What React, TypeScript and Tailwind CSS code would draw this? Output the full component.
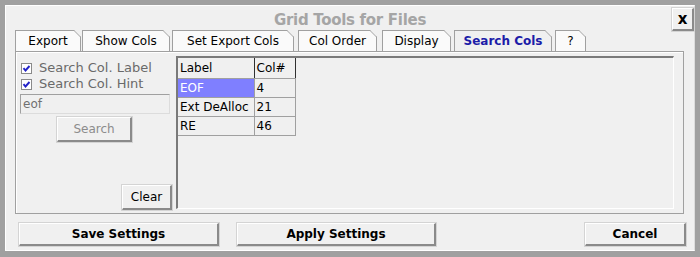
import React, { useState } from 'react';

const tabs = ['Export', 'Show Cols', 'Set Export Cols', 'Col Order', 'Display', 'Search Cols', '?'];
const tabWidths = ['w-[66px]', 'w-[88px]', 'w-[122px]', 'w-[79px]', 'w-[69px]', 'w-[98px]', 'w-[31px]'];
const tabGaps = ['mr-[1px]', 'mr-[2px]', 'mr-[4px]', 'mr-[5px]', 'mr-[3px]', 'mr-[3px]', ''];

const rows = [
  { label: 'EOF', col: '4' },
  { label: 'Ext DeAlloc', col: '21' },
  { label: 'RE', col: '46' },
];

const Tab: React.FC<{ label: string; active: boolean; width: string; gap: string; onClick: () => void }> = ({
  label,
  active,
  width,
  gap,
  onClick,
}) => (
  <div
    onClick={onClick}
    className={`relative h-[21px] ${width} ${gap} border-l border-t border-r border-[#a0a0a0] flex items-center justify-center text-[12px] cursor-default ${
      active ? 'bg-[#f0f0f0] text-[#1c1ca8] font-bold' : 'bg-[#fafafa] text-black'
    }`}
  >
    {label}
    {/* folded top-right corner */}
    <svg className="absolute -top-px -right-px" width="7" height="7" viewBox="0 0 7 7">
      <polygon points="0,0 7,0 7,7" fill="#f0f0f0" />
      <line x1="0" y1="0.5" x2="6.5" y2="7" stroke="#a0a0a0" strokeWidth="1" />
    </svg>
  </div>
);

const Check: React.FC<{ checked: boolean }> = ({ checked }) => (
  <svg width="11" height="11" viewBox="0 0 11 11" className="shrink-0">
    <rect x="0.5" y="0.5" width="10" height="10" fill="#ffffff" stroke="#8a8a8a" />
    {checked && <path d="M2.5 5.2 L4.5 7.5 L8.5 3" fill="none" stroke="#2222c8" strokeWidth="1.9" />}
  </svg>
);

const raised =
  'border-t border-l border-white border-b-2 border-r-2 border-b-[#8a8a8a] border-r-[#8a8a8a] bg-[#f0f0f0] shadow-[0_0_0_1px_#d4d4d4]';

export default function App() {
  const [active, setActive] = useState(5);
  const [label, setLabel] = useState(true);
  const [hint, setHint] = useState(true);

  return (
    <div className="w-[700px] h-[257px] bg-[#a0a0a0] pt-[5px] pl-[5px] pr-[5px] pb-[6px] flex font-['DejaVu_Sans',sans-serif]">
      <div className="flex-1 border-l border-t border-white border-r border-b border-r-[#dcdcdc] border-b-white bg-[#f0f0f0] flex flex-col">
        {/* title bar */}
        <div className="grid grid-cols-[1fr_auto_1fr] items-start h-[24px]">
          <div />
          <div className="pt-[5px] text-[15px] tracking-[-0.3px] font-bold text-[#a5a5a5] leading-[19px]">Grid Tools for Files</div>
          <div className="flex justify-end pt-[2px]">
            <button className={`w-[22px] h-[23px] ${raised} flex items-center justify-center text-[15px] font-bold leading-none text-black`}>
              x
            </button>
          </div>
        </div>

        {/* tabs */}
        <div className="flex pl-[9px]">
          {tabs.map((t, i) => (
            <Tab key={t} label={t} active={i === active} width={tabWidths[i]} gap={tabGaps[i]} onClick={() => setActive(i)} />
          ))}
        </div>

        {/* tab panel */}
        <div className="ml-[9px] mr-[10px] h-[163px] border border-[#a0a0a0] shadow-[inset_1px_1px_0_#ffffff] flex pt-[4px] pr-[9px] pb-[4px]">
          <div className="w-[160px] flex flex-col pl-[5px] pr-[5px] text-[13px] text-[#6a6a6a]">
            <label className="flex items-center gap-[7px] mt-[4px] h-[16px]" onClick={() => setLabel(!label)}>
              <Check checked={label} />
              <span>Search Col. Label</span>
            </label>
            <label className="flex items-center gap-[7px] h-[16px]" onClick={() => setHint(!hint)}>
              <Check checked={hint} />
              <span>Search Col. Hint</span>
            </label>
            <div className="mt-[2px] h-[20px] border border-[#a0a0a0] border-r-[#dcdcdc] border-b-[#dcdcdc] bg-[#f0f0f0] text-[12px] text-[#707070] pl-[2px] leading-[18px] -ml-[1px] w-[150px]">
              eof
            </div>
            <div className="flex pl-[36px] mt-[3px]">
              <button className={`w-[75px] h-[25px] ${raised} text-[12px] text-[#8c8c8c]`}>Search</button>
            </div>
            <div className="flex-1" />
            <div className="flex justify-end -mr-[1px] -mb-[1px]">
              <button className={`w-[50px] h-[25px] ${raised} text-[12px] text-black`}>Clear</button>
            </div>
          </div>

          {/* grid */}
          <div className="flex-1 border-l-2 border-t-2 border-l-[#7a7a7a] border-t-[#7a7a7a] border-r border-b border-r-white border-b-white bg-[#f0f0f0]">
            <table className="border-collapse text-[12px] text-black">
              <thead>
                <tr className="h-[20px]">
                  <th className="w-[76px] text-left font-normal pl-[2px] border-r border-b border-r-[#303030] border-b-[#a0a0a0]">Label</th>
                  <th className="w-[41px] text-left font-normal pl-[2px] border-r border-b border-r-[#303030] border-b-[#a0a0a0]">Col#</th>
                </tr>
              </thead>
              <tbody>
                {rows.map((r, i) => (
                  <tr key={r.label} className="h-[19px]">
                    <td className={`pl-[2px] border-r border-b border-[#a0a0a0] ${i === 0 ? 'bg-[#7f7fff] text-white' : ''}`}>{r.label}</td>
                    <td className="pl-[2px] border-r border-b border-[#a0a0a0]">{r.col}</td>
                  </tr>
                ))}
              </tbody>
            </table>
          </div>
        </div>

        {/* bottom buttons */}
        <div className="flex items-start pl-[13px] pr-[8px] mt-[9px]">
          <button className={`w-[200px] h-[23px] ${raised} text-[12px] font-bold text-black`}>Save Settings</button>
          <button className={`w-[199px] h-[23px] ml-[18px] ${raised} text-[12px] font-bold text-black`}>Apply Settings</button>
          <div className="flex-1" />
          <button className={`w-[101px] h-[23px] ${raised} text-[12px] font-bold text-black`}>Cancel</button>
        </div>
      </div>
    </div>
  );
}
